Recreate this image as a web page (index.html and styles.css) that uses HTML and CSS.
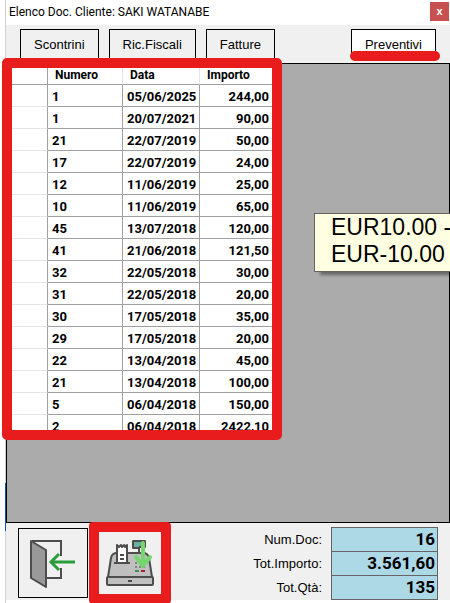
FILE: index.html
```html
<!DOCTYPE html>
<html lang="it">
  <head>
    <meta charset="UTF-8" />
    <title>Elenco Doc. Cliente</title>
    <meta name="viewport" content="width=device-width, initial-scale=1" />
    <link rel="stylesheet" href="styles.css">
  </head>
  <body>
    <div class="window">
      <header class="titlebar">
        <h1>Elenco Doc. Cliente: SAKI WATANABE</h1>
        <button type="button" class="close" aria-label="Chiudi">x</button>
      </header>

      <nav class="tabs">
        <button type="button">Scontrini</button>
        <button type="button">Ric.Fiscali</button>
        <button type="button">Fatture</button>
        <button type="button" class="active">Preventivi</button>
      </nav>

      <main class="grid">
        <div class="documents">
          <table>
            <thead>
              <tr><th class="selector"></th><th class="number">Numero</th><th class="date">Data</th><th>Importo</th></tr>
            </thead>
            <tbody>
              <tr><td></td><td>1</td><td>05/06/2025</td><td>244,00</td></tr>
              <tr><td></td><td>1</td><td>20/07/2021</td><td>90,00</td></tr>
              <tr><td></td><td>21</td><td>22/07/2019</td><td>50,00</td></tr>
              <tr><td></td><td>17</td><td>22/07/2019</td><td>24,00</td></tr>
              <tr><td></td><td>12</td><td>11/06/2019</td><td>25,00</td></tr>
              <tr><td></td><td>10</td><td>11/06/2019</td><td>65,00</td></tr>
              <tr><td></td><td>45</td><td>13/07/2018</td><td>120,00</td></tr>
              <tr><td></td><td>41</td><td>21/06/2018</td><td>121,50</td></tr>
              <tr><td></td><td>32</td><td>22/05/2018</td><td>30,00</td></tr>
              <tr><td></td><td>31</td><td>22/05/2018</td><td>20,00</td></tr>
              <tr><td></td><td>30</td><td>17/05/2018</td><td>35,00</td></tr>
              <tr><td></td><td>29</td><td>17/05/2018</td><td>20,00</td></tr>
              <tr><td></td><td>22</td><td>13/04/2018</td><td>45,00</td></tr>
              <tr><td></td><td>21</td><td>13/04/2018</td><td>100,00</td></tr>
              <tr><td></td><td>5</td><td>06/04/2018</td><td>150,00</td></tr>
              <tr><td></td><td>2</td><td>06/04/2018</td><td>2422,10</td></tr>
            </tbody>
          </table>
        </div>
        <div class="tooltip" role="tooltip">EUR10.00 -<br />EUR-10.00</div>
      </main>

      <footer class="bottom">
        <button type="button" class="tool" aria-label="Esci">
          <svg width="50" height="52" viewBox="0 0 50 52" fill="none">
            <path d="M4 4H33V19M33 31V41H18" stroke="#4d4d4d" stroke-width="2" />
            <path d="M3 4L18 13V50L3 41Z" fill="#999" stroke="#4d4d4d" stroke-width="2" stroke-linejoin="round" />
            <path d="M47 25H23M31 17L23 25L31 33" stroke="#2a9d3a" stroke-width="3" />
          </svg>
        </button>
        <button type="button" class="tool highlight" aria-label="Registratore di cassa">
          <svg width="50" height="48" viewBox="0 0 50 48" fill="none" stroke-linejoin="round">
            <path d="M34 15V9H28V2H40V8H34" fill="#6aaea0" stroke="#4d4d4d" stroke-width="2" />
            <path d="M3 38L6 19Q7 14 12 14H38Q43 14 44 19L47 38Z" fill="#bfbfbf" stroke="#4d4d4d" stroke-width="2" />
            <rect x="2" y="38" width="46" height="8" rx="1" fill="#bfbfbf" stroke="#4d4d4d" stroke-width="2" />
            <path d="M23 42H27" stroke="#4d4d4d" stroke-width="2" />
            <path d="M9 24H25" stroke="#4d4d4d" stroke-width="2" />
            <path d="M12 24V6L14 8L16 6L17 8L19 6L20 8L22 6V24Z" fill="#fff" stroke="#4d4d4d" stroke-width="2" />
            <path d="M15 16H19M15 20H19" stroke="#4d4d4d" stroke-width="2" />
            <path d="M30 24H32M34 24H36M38 24H40M30 28H32M34 28H36M38 28H40" stroke="#4d4d4d" stroke-width="1" />
            <path d="M30 32H34" stroke="#3f8f4c" stroke-width="2" />
            <path d="M36 32H40" stroke="#b02030" stroke-width="2" />
            <path d="M38 4V26M31 18L38 27L45 18" stroke="#74d66c" stroke-width="4" stroke-linecap="round" />
          </svg>
        </button>
        <div class="totals">
          <label for="numDoc">Num.Doc:</label>
          <input type="text" id="numDoc" value="16" readonly />
          <label for="totImporto">Tot.Importo:</label>
          <input type="text" id="totImporto" value="3.561,60" readonly />
          <label for="totQta">Tot.Qtà:</label>
          <input type="text" id="totQta" value="135" readonly />
        </div>
      </footer>
    </div>
  </body>
</html>
```
FILE: styles.css
```css
* {
  box-sizing: border-box;
}
body {
  margin: 0;
  background: #fff;
  font-family: "Liberation Sans", Arial, sans-serif;
  font-size: 13px;
  color: #000;
  overflow-x: hidden;
}
button {
  font: inherit;
  color: inherit;
  border: 1px solid #000;
  border-radius: 0;
  background: #f0f0f0;
}

.window {
  display: flex;
  flex-direction: column;
  height: 100vh;
  margin-left: 5px;
  padding-bottom: 3px;
  border-left: 1px solid;
  border-image: linear-gradient(#d0d0d0 80%, #0a5ca8 80% 88%, #d0d0d0 88%) 1;
}

/* Title bar */
.titlebar {
  display: flex;
  justify-content: space-between;
  align-items: center;
  height: 25px;
  padding: 0 1px 2px 3px;
}
.titlebar h1 {
  margin: 0;
  font-family: Roboto, sans-serif;
  font-size: 12px;
  font-weight: 400;
}
.close {
  width: 19px;
  height: 19px;
  padding: 0 0 2px;
  border: none;
  background: #c75050;
  color: #fff;
  font-size: 11px;
  font-weight: 700;
}

/* Document type buttons */
.tabs {
  display: flex;
  align-items: flex-start;
  gap: 10px;
  height: 38px;
  padding: 4px 14px 0;
  background: #f0f0f0;
}
.tabs button {
  height: 30px;
  padding: 0 13px;
}
.tabs .active {
  position: relative;
  margin-left: auto;
  background: #fff;
}
.tabs .active::after {
  content: "";
  position: absolute;
  left: -2px;
  right: -5px;
  bottom: -3px;
  height: 10px;
  border-radius: 5px;
  background: #e81c1c;
}

/* Document list */
.grid {
  position: relative;
  flex: 1;
  min-height: 0;
  border: 1px solid #000;
  background: #ababab;
}
.documents {
  position: relative;
  width: 270px;
  height: 372px;
}
.documents::after {
  content: "";
  position: absolute;
  inset: -6px -5px -4px;
  border: 10px solid #e81c1c;
  border-radius: 5px;
}
table {
  width: 100%;
  table-layout: fixed;
  border-collapse: separate;
  border-spacing: 0;
  background: #fff;
  font-family: Roboto, sans-serif;
  font-size: 13px;
  font-weight: 700;
}
th,
td {
  height: 22px;
  padding: 2px 3px 0 4px;
  border-right: 1px solid #a0a0a0;
  border-bottom: 1px solid #a0a0a0;
  line-height: 16px;
  text-align: left;
}
th {
  height: 21px;
  padding: 2px 7px 0;
  border-right-color: #e5e5e5;
  font-size: 12px;
}
.selector {
  width: 41px;
  border-right-color: #a0a0a0;
}
.number {
  width: 75px;
}
.date {
  width: 77px;
}
td:first-child {
  border-bottom-color: #e5e5e5;
}
td:last-child {
  padding-right: 7px;
  text-align: right;
}
.tooltip {
  position: absolute;
  top: 149px;
  left: 307px;
  padding: 0 16px 3px;
  border: 1px solid #646464;
  background: #ffffe1;
  box-shadow: 5px 4px 3px -1px rgba(0, 0, 0, 0.4);
  font-size: 23px;
  line-height: 27px;
  white-space: nowrap;
}

/* Bottom bar */
.bottom {
  display: flex;
  align-items: flex-start;
  gap: 7px;
  height: 77px;
  padding: 5px 12px 0;
  background: #f0f0f0;
}
.tool {
  position: relative;
  display: grid;
  place-items: center;
  width: 70px;
  height: 70px;
  padding: 0;
}
.highlight {
  border-color: transparent;
}
.highlight::after {
  content: "";
  position: absolute;
  inset: -7px;
  border: 10px solid #e81c1c;
  border-radius: 4px;
}
.totals {
  display: grid;
  grid-template-columns: auto 107px;
  column-gap: 9px;
  align-items: center;
  margin: -1px 0 0 auto;
  text-align: right;
}
.totals input {
  width: 100%;
  height: 25px;
  margin-bottom: -1px;
  padding: 0 2px 2px;
  border: 1px solid #646464;
  border-radius: 0;
  background: #add8e6;
  color: #000;
  font-family: Roboto, sans-serif;
  font-size: 17px;
  font-weight: 700;
  text-align: right;
}
```
